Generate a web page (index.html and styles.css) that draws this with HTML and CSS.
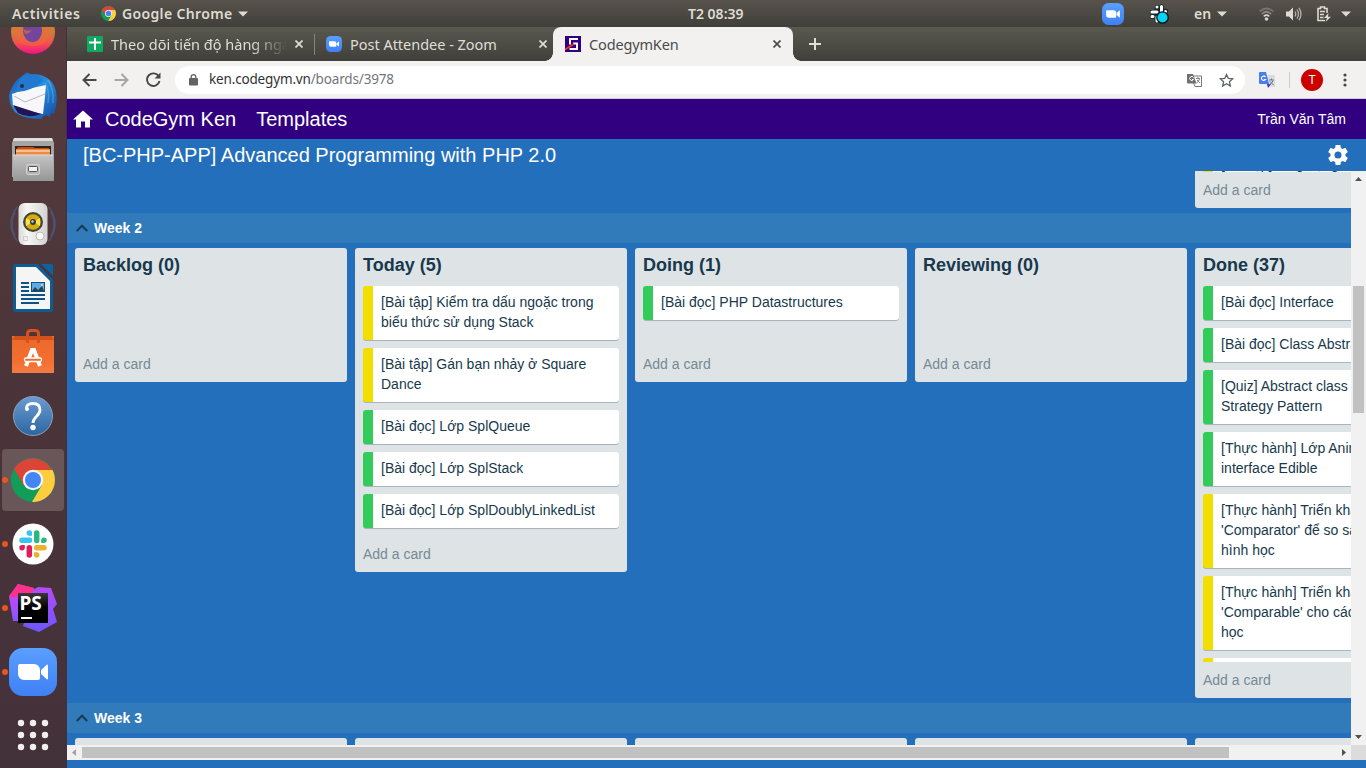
FILE: index.html
```html
<!DOCTYPE html>
<html lang="vi">
<head>
<meta charset="utf-8">
<title>CodegymKen</title>
<link rel="stylesheet" href="styles.css">
</head>
<body>
<svg class="defs" width="0" height="0">
  <defs>
    <linearGradient id="zoomBlue" x1="0" y1="0" x2="0" y2="1"><stop offset="0" stop-color="#5a9fff"/><stop offset="1" stop-color="#3f80f5"/></linearGradient>
    <linearGradient id="fox" x1="0" y1="0" x2="0" y2="1"><stop offset=".5" stop-color="#c9803a"/><stop offset=".75" stop-color="#f4524b"/><stop offset="1" stop-color="#f0108c"/></linearGradient>
    <linearGradient id="bird" x1="0" y1="0" x2="1" y2="1"><stop offset="0" stop-color="#1558b8"/><stop offset=".5" stop-color="#2a8fe0"/><stop offset="1" stop-color="#134a9c"/></linearGradient>
    <linearGradient id="steel" x1="0" y1="0" x2="0" y2="1"><stop offset="0" stop-color="#c4c4c4"/><stop offset="1" stop-color="#969696"/></linearGradient>
    <linearGradient id="bag" x1="0" y1="0" x2="0" y2="1"><stop offset="0" stop-color="#e9682c"/><stop offset=".7" stop-color="#f3702f"/><stop offset="1" stop-color="#f07c48"/></linearGradient>
    <linearGradient id="help" x1="0" y1="0" x2="0" y2="1"><stop offset="0" stop-color="#6a9bd4"/><stop offset="1" stop-color="#2d669f"/></linearGradient>
    <linearGradient id="speaker" x1="0" y1="0" x2="1" y2="0"><stop offset="0" stop-color="#d8d8d6"/><stop offset=".3" stop-color="#f6f6f5"/><stop offset="1" stop-color="#d2d2d0"/></linearGradient>
    <linearGradient id="psA" x1="0" y1="0" x2="0" y2="1"><stop offset="0" stop-color="#ff318c"/><stop offset=".4" stop-color="#b74af7"/><stop offset="1" stop-color="#8a55ff"/></linearGradient>
    <linearGradient id="psB" x1="0" y1="0" x2="0" y2="1"><stop offset="0" stop-color="#b74af7"/><stop offset="1" stop-color="#6b57ff"/></linearGradient>
    <linearGradient id="psC" x1="0" y1="0" x2="0" y2="1"><stop offset="0" stop-color="#3a3a3a"/><stop offset=".5" stop-color="#000"/></linearGradient>
    <symbol id="chrome" viewBox="0 0 44 44">
      <circle cx="22" cy="22" r="22" fill="#109d59"/>
      <path d="M22 12H41.500A22 22 0 0 1 21 44L31 27Z" fill="#ffcd40"/>
      <path d="M3 11 13 28 22 22 22 12H41A22 22 0 0 0 3 11Z" fill="#db4437"/>
      <circle cx="22" cy="22" r="10.200" fill="#f4f4f4"/><circle cx="22" cy="22" r="8" fill="#4285f4"/>
    </symbol>
    <symbol id="zoom" viewBox="0 0 48 48">
      <rect width="48" height="48" rx="14" fill="url(#zoomBlue)"/>
      <path d="M9 18a2 2 0 0 1 2-2h14a6 6 0 0 1 6 6v8a2 2 0 0 1-2 2H15a6 6 0 0 1-6-6ZM32 22l5.500-5Q39 16 39 17.500v13q0 1.500-1.500.5L32 26Z" fill="#fff"/>
    </symbol>
    <symbol id="cross" viewBox="0 0 8 8"><path d="M.5.5l7 7m0-7-7 7" fill="none" stroke="currentColor" stroke-width="1.700"/></symbol>
    <symbol id="caret" viewBox="0 0 10 6"><path d="M0 .5h10L5 5.500Z" fill="currentColor"/></symbol>
    <symbol id="chevron" viewBox="0 0 12 8"><path d="M.7 7l5.300-5.300L11.300 7" fill="none" stroke="#153a52" stroke-width="2"/></symbol>
  </defs>
</svg>

<header class="topbar">
  <span class="activities">Activities</span>
  <svg class="app-icon" width="15" height="15"><use href="#chrome"/></svg>
  <span class="app-name">Google Chrome</span>
  <svg class="app-caret" width="10" height="6"><use href="#caret"/></svg>
  <span class="clock">T2 08:39</span>
  <div class="tray">
    <svg width="22" height="22"><use href="#zoom"/></svg>
    <svg class="tray-slack" width="20" height="20" viewBox="0 0 20 20"><g stroke="#16262c" stroke-width="4.500" stroke-linecap="round"><path d="M8 3v5M12.500 2.500v5M3 8h5M3 12.500h5M8 13v4M13 7h4"/></g><g stroke="#fff" stroke-width="3" stroke-linecap="round"><path d="M8 3v0M12.500 2.500v5M3 8h5M3 12.500h1M8 13v4M16.500 7.500h0"/></g><circle cx="13.500" cy="13.500" r="5.700" fill="#00d4f7" stroke="#111" stroke-width="1.300"/></svg>
    <span class="lang">en</span>
    <svg class="lang-caret" width="10" height="6"><use href="#caret"/></svg>
    <svg class="tray-wifi" width="15" height="14" viewBox="0 0 15 14"><g fill="none" stroke-width="1.700"><path d="M.8 4.500Q7.500-1.500 14.200 4.500" stroke="#77746e"/><path d="M2.800 7Q7.500 2.500 12.200 7" stroke="#8b8882"/><path d="M4.800 9.400Q7.500 7 10.200 9.400" stroke="#d5d3cf"/></g><circle cx="7.500" cy="12" r="1.800" fill="#d5d3cf"/></svg>
    <svg class="tray-volume" width="16" height="14" viewBox="0 0 16 14"><path d="M0 4.500h3L7 .5v13L3 9.500H0Z" fill="#dfdbd2"/><path d="M9 4.500q1.500 2.500 0 5M11 2.500q3 4.500 0 9M13 .8q4 6.200 0 12.400" fill="none" stroke="#b5b1a9" stroke-width="1.300"/></svg>
    <svg class="tray-battery" width="15" height="16" viewBox="0 0 15 16"><path d="M8 14.500H1V2.500h2.500V1h4v1.500H10V7M3 5.500h5M3 8.500h4M3 11.500h3.500" fill="none" stroke="#dfdbd2" stroke-width="1.600"/><path d="M11.500 7 7 12h3l-1.500 4L14 10.800h-3Z" fill="#dfdbd2"/></svg>
    <svg class="tray-caret" width="10" height="6"><use href="#caret"/></svg>
  </div>
</header>

<div class="desktop">
  <nav class="dock">
    <div class="dock-item dock-first">
      <svg width="46" height="46" viewBox="0 0 46 46"><circle cx="23" cy="23" r="22" fill="url(#fox)"/><path d="M3 17Q5 37 23 37T41 16" fill="#ef6a3b" opacity=".5"/><ellipse cx="22.500" cy="22" rx="9.500" ry="11" fill="#74459c"/><path d="M13 20Q18 23 22 21 19 25 15 25" fill="#bd5f58"/></svg>
    </div>
    <div class="dock-item">
      <svg width="50" height="50" viewBox="0 0 50 50"><path d="M14 5Q20-1 22 3 43 2 48 20 50 33 46 43L43 42 42 46 37 44 33 48Q15 48 7 41 1 34 1 24 5 10 14 5Z" fill="url(#bird)"/><path d="M4 23 15 19 38 14Q37 28 35 43L20 40 5 35Z" fill="#f7f7fa"/><path d="m6 25 11 6 20-8" fill="none" stroke="#b6b7c2"/><path d="M9 21Q8 7 19 3 34 5 35 10 22 21 9 21Z" fill="#2378cf"/><path d="M5 34 33 43Q20 48 10 42Z" fill="#251455"/><circle cx="14" cy="15" r="2" fill="#24303b"/><path d="M37 12Q42 20 40 32M40 9Q46 18 45 32" fill="none" stroke="#5ab1ed" opacity=".5" stroke-width="1.500"/></svg>
    </div>
    <div class="dock-item">
      <svg class="raised" width="42" height="44" viewBox="0 0 42 44"><path d="M2 1h38l2 5v34H0V6Z" fill="#a5a5a5"/><path d="M2 1h38l1 3H1Z" fill="#dedede"/><path d="M3 9h36v10H3Z" fill="#2e2420"/><path d="M6 10h15l2 1h14v2H4Z" fill="#c74b19"/><path d="M4 12h34v6H4Z" fill="#ee8b42"/><path d="M4 14h34" stroke="#fff2df"/><path d="M1 18h40l1 26H1Z" fill="url(#steel)"/><path d="M1 18h40" stroke="#e0e0e0"/><rect x="14.500" y="27.500" width="13" height="10" rx="2" fill="#b5b5b5" stroke="#d5d5d5"/><rect x="16.500" y="29.500" width="9" height="5" rx="1" fill="#f2f2f2" stroke="#555"/></svg>
    </div>
    <div class="dock-item">
      <svg width="48" height="44" viewBox="0 0 48 44"><path d="M8 5q-12 17 0 34M6 10q-6 12 0 24M40 5q12 17 0 34M42 10q6 12 0 24" fill="none" stroke="#4c6291" stroke-width="1.500" opacity=".6"/><rect x="9.500" y="1" width="29" height="42" rx="6" fill="url(#speaker)"/><circle cx="24" cy="20" r="10" fill="#454539"/><circle cx="24" cy="20" r="7.800" fill="#d4ad08"/><path d="M24 20 17 16v8ZM24 20l7-4v8Z" fill="#f5e24c"/><circle cx="24" cy="20" r="3" fill="#343a42"/><circle cx="23.500" cy="19.500" r="1.200" fill="#ccc"/><circle cx="31" cy="34" r="4" fill="#f8f8f8" stroke="#bbb"/><rect x="14.500" y="34.500" width="4" height="4" fill="none" stroke="#d0d0d0"/></svg>
    </div>
    <div class="dock-item">
      <svg width="40" height="48" viewBox="0 0 40 48"><path d="M2 0h23l15 15v31a2 2 0 0 1-2 2H2a2 2 0 0 1-2-2V2a2 2 0 0 1 2-2Z" fill="#0e5c92"/><path d="M3 3h20l14 14v28H3Z" fill="#f5f5f5"/><path d="M26.500 0 40 13.500" stroke="#4b3439" stroke-width="2.500"/><path d="M28 0h10a2 2 0 0 1 2 2v10Z" fill="#0b64a0"/><path d="M8 19h8M8 23h8M8 27h8M8 31h24M8 35h24M8 39h18" stroke="#0c5387" stroke-width="2"/><rect x="18.500" y="18.500" width="13" height="9" fill="#5aace6" stroke="#0c5387"/><path d="m19 27 3-4 3 3 4-4 2 5Z" fill="#27414d"/><circle cx="29" cy="21" r="1" fill="#ffdd57"/></svg>
    </div>
    <div class="dock-item">
      <svg class="raised" width="42" height="44" viewBox="0 0 42 44"><path d="M0 7h42v37H0Z" fill="url(#bag)"/><path d="M0 11 3 7H39l3 4Z" fill="#d4501d"/><path d="M15.500 14V5q0-3.500 3.500-3.500h4q3.500 0 3.500 3.500v9" fill="none" stroke="#d6511d" stroke-width="3"/><path d="m14 37 6-16h2l6 16" fill="none" stroke="#fff" stroke-width="4"/><rect x="12.500" y="29" width="17" height="3.500" rx="1.500" fill="#ee6b2c" stroke="#fff" stroke-width="1.300"/></svg>
    </div>
    <div class="dock-item">
      <svg width="42" height="42" viewBox="0 0 42 42"><circle cx="21" cy="21" r="19.500" fill="url(#help)" stroke="#8e9fb4"/><path d="M14.500 14Q14 8.500 21 8.500t7 6.500c0 6-7 6.500-7 13" fill="none" stroke="#fff" stroke-width="2.800"/><circle cx="15" cy="14" r="2" fill="#fff"/><circle cx="21" cy="32.500" r="2.700" fill="#fff"/></svg>
    </div>
    <div class="dock-item running active"><svg width="44" height="44"><use href="#chrome"/></svg></div>
    <div class="dock-item running">
      <svg width="42" height="42" viewBox="0 0 42 42"><circle cx="21" cy="21" r="20.500" fill="#fff"/><g fill="none" stroke-width="5.500" stroke-linecap="round"><path d="M10 17.300h7.500M17.300 10v0" stroke="#36c5f0"/><path d="M24.700 10v7.500M32 17.300h0" stroke="#2eb67d"/><path d="M24.700 24.700H32M24.700 32v0" stroke="#ecb22e"/><path d="M17.300 24.700V32M10 24.700h0" stroke="#e01e5a"/></g><path d="M17.300 10h2.700v2.700h-2.700Z" fill="#36c5f0"/><path d="M29.300 17.300H32v2.700h-2.700Z" fill="#2eb67d"/><path d="M22 29.300h2.700V32H22Z" fill="#ecb22e"/><path d="M10 22h2.700v2.700H10Z" fill="#e01e5a"/></svg>
    </div>
    <div class="dock-item running">
      <svg width="48" height="48" viewBox="0 0 48 48"><path d="M0 12 9 0 25 4V37H4Z" fill="url(#psA)"/><path d="M9 0 25 4 20 12 0 13Z" fill="#ff318c"/><path d="m24 6 5-3 13 1 6 16-4 5 4 13-18 10-16-6Z" fill="url(#psB)"/><rect x="9" y="9" width="30" height="30" fill="url(#psC)"/><path d="M12 34h11" stroke="#fff" stroke-width="2"/><text class="ps-text" x="10.500" y="26">PS</text></svg>
    </div>
    <div class="dock-item running"><svg width="48" height="48"><use href="#zoom"/></svg></div>
    <div class="dock-item">
      <svg class="raised" width="32" height="32" viewBox="0 0 32 32" fill="#f2f0ef"><circle cx="4" cy="4" r="3.200"/><circle cx="16" cy="4" r="3.200"/><circle cx="28" cy="4" r="3.200"/><circle cx="4" cy="16" r="3.200"/><circle cx="16" cy="16" r="3.200"/><circle cx="28" cy="16" r="3.200"/><circle cx="4" cy="28" r="3.200"/><circle cx="16" cy="28" r="3.200"/><circle cx="28" cy="28" r="3.200"/></svg>
    </div>
  </nav>

  <main class="browser">
    <div class="tabs">
      <div class="tab tab-sheet">
        <svg width="16" height="16" viewBox="0 0 16 16"><rect width="16" height="16" rx="1" fill="#0fa960"/><path d="M2 6.500h12M8 2v12" stroke="#fff" stroke-width="2"/></svg>
        <span class="tab-title fade">Theo dõi tiến độ hàng ngày</span>
        <svg class="close" width="8" height="8"><use href="#cross"/></svg>
      </div>
      <div class="tab tab-zoom">
        <svg width="16" height="16"><use href="#zoom"/></svg>
        <span class="tab-title">Post Attendee - Zoom</span>
        <svg class="close" width="8" height="8"><use href="#cross"/></svg>
      </div>
      <div class="tab tab-active">
        <svg width="16" height="16" viewBox="0 0 16 16"><rect width="16" height="16" fill="#310080"/><path d="M13 3H5v5.500M8 7.500h4V13H4.500" fill="none" stroke="#fff" stroke-width="2"/><path d="M0 13.500 9 8" stroke="#f03a17" stroke-width="1.600"/></svg>
        <span class="tab-title">CodegymKen</span>
        <svg class="close" width="8" height="8"><use href="#cross"/></svg>
      </div>
      <svg class="new-tab" width="12" height="12" viewBox="0 0 12 12"><path d="M6 0v12M0 6h12" stroke="#deded9" stroke-width="2"/></svg>
    </div>

    <div class="toolbar">
      <svg class="back" width="15" height="14" viewBox="0 0 15 14"><path d="M14.500 7H1.500M7.500 1l-6 6 6 6" fill="none" stroke="#45484b" stroke-width="1.900"/></svg>
      <svg class="forward" width="15" height="14" viewBox="0 0 15 14"><path d="M.5 7h13M7.500 1l6 6-6 6" fill="none" stroke="#a3a5a6" stroke-width="1.900"/></svg>
      <svg class="reload" width="15" height="15" viewBox="0 0 15 15"><path d="M12.800 4.500A6.300 6.300 0 1 0 13.500 9" fill="none" stroke="#45484b" stroke-width="1.900"/><path d="M14.500.5V6.500H8.500Z" fill="#45484b"/></svg>
      <div class="omnibox">
        <svg class="lock" width="9" height="12" viewBox="0 0 9 12"><path d="M2.200 5V3a2.300 2.300 0 0 1 4.600 0v2" fill="none" stroke="#5f6368" stroke-width="1.300"/><rect y="4" width="9" height="7.500" rx="1" fill="#5f6368"/></svg>
        <span class="url"><span class="host">ken.codegym.vn</span>/boards/3978</span>
        <svg width="15" height="14" viewBox="0 0 15 14"><path d="M6 3h8.500v10.500H8L6.500 10" fill="#fff" stroke="#777"/><path d="M0 1h6l3.500 9.500H1a1 1 0 0 1-1-1Z" fill="#707070"/><path d="M6.500 4.500A2 2 0 1 0 6.500 6.500H5" fill="none" stroke="#fff"/><path d="M9 5.500h4M11 4v1.500M12.500 6q-1 3-3 4M10 7l3 3" fill="none" stroke="#777" stroke-width=".9"/></svg>
        <svg class="star" width="15" height="14" viewBox="0 0 15 14"><path d="m7.500 1.500 1.800 4 4.400.4-3.300 2.900 1 4.300-3.900-2.300-3.900 2.300 1-4.300L1.300 5.900l4.400-.4Z" fill="none" stroke="#5f6368" stroke-width="1.300"/></svg>
      </div>
      <svg class="ext" width="16" height="16" viewBox="0 0 16 16"><path d="M7 3h9v12H9Z" fill="#dcdcdc"/><path d="M0 1q0-1 1-1h6l3 12H1q-1 0-1-1Z" fill="#4a7df0"/><path d="M8 12h4l-3 4Z" fill="#3b31c7"/><path d="M6.500 5A2.200 2.200 0 1 0 6.500 7.500H5" fill="none" stroke="#fff" stroke-width="1.200"/><path d="M10 8h5M12.500 6.500V8M14 8.500q-1 3-3.500 4M11 9.500l3.500 3.500" fill="none" stroke="#5f7f92"/></svg>
      <span class="divider"></span>
      <span class="avatar">T</span>
      <svg class="menu" width="4" height="14" viewBox="0 0 4 14" fill="#45484b"><circle cx="2" cy="2" r="1.600"/><circle cx="2" cy="7" r="1.600"/><circle cx="2" cy="12" r="1.600"/></svg>
    </div>

    <div class="navbar">
      <svg width="20" height="18" viewBox="0 0 20 18"><path d="M10 .5 20 9.500h-3v8h-5v-6H8v6H3v-8H0Z" fill="#fff"/></svg>
      <span class="brand">CodeGym Ken</span>
      <span class="nav-link">Templates</span>
      <span class="user">Trần Văn Tâm</span>
    </div>
    <div class="board-title">
      <h1>[BC-PHP-APP] Advanced Programming with PHP 2.0</h1>
      <svg width="20" height="20" viewBox="2 2 20 20"><path fill="#fff" d="M19.430 12.980c.04-.32.07-.64.07-.98s-.03-.66-.07-.98l2.110-1.650c.19-.15.24-.42.12-.64l-2-3.460c-.12-.22-.39-.3-.61-.22l-2.490 1c-.52-.4-1.080-.73-1.690-.98l-.38-2.650C14.460 2.180 14.250 2 14 2h-4c-.25 0-.46.18-.49.42l-.38 2.650c-.61.25-1.170.59-1.690.98l-2.490-1c-.23-.09-.49 0-.61.22l-2 3.460c-.13.22-.07.49.12.64l2.110 1.650c-.04.32-.07.65-.07.98s.03.66.07.98l-2.110 1.650c-.19.15-.24.42-.12.64l2 3.460c.12.22.39.3.61.22l2.490-1c.52.4 1.080.73 1.690.98l.38 2.650c.03.24.24.42.49.42h4c.25 0 .46-.18.49-.42l.38-2.650c.61-.25 1.170-.59 1.690-.98l2.490 1c.23.09.49 0 .61-.22l2-3.460c.12-.22.07-.49-.12-.64ZM12 15.500A3.500 3.500 0 1 1 12 8.500a3.500 3.500 0 0 1 0 7Z"/></svg>
    </div>

    <div class="scroller">
      <div class="viewport">
        <div class="lane lane-top">
          <section class="column">
            <div class="cards"><article class="card yellow">[Bài tập] Ứng dụng</article></div>
            <div class="add">Add a card</div>
          </section>
        </div>
        <div class="lane-head"><svg width="12" height="8"><use href="#chevron"/></svg>Week 2</div>
        <div class="lane lane-main">
          <section class="column"><h2>Backlog (0)</h2><div class="cards"></div><div class="add">Add a card</div></section>
          <section class="column">
            <h2>Today (5)</h2>
            <div class="cards">
              <article class="card yellow">[Bài tập] Kiểm tra dấu ngoặc trong<br>biểu thức sử dụng Stack</article>
              <article class="card yellow">[Bài tập] Gán bạn nhảy ở Square<br>Dance</article>
              <article class="card green">[Bài đọc] Lớp SplQueue</article>
              <article class="card green">[Bài đọc] Lớp SplStack</article>
              <article class="card green">[Bài đọc] Lớp SplDoublyLinkedList</article>
            </div>
            <div class="add">Add a card</div>
          </section>
          <section class="column"><h2>Doing (1)</h2><div class="cards"><article class="card green">[Bài đọc] PHP Datastructures</article></div><div class="add">Add a card</div></section>
          <section class="column"><h2>Reviewing (0)</h2><div class="cards"></div><div class="add">Add a card</div></section>
          <section class="column">
            <h2>Done (37)</h2>
            <div class="cards">
              <article class="card green">[Bài đọc] Interface</article>
              <article class="card green">[Bài đọc] Class Abstract</article>
              <article class="card green">[Quiz] Abstract class<br>Strategy Pattern</article>
              <article class="card green">[Thực hành] Lớp Animal<br>interface Edible</article>
              <article class="card yellow">[Thực hành] Triển khai<br>'Comparator' để so sánh<br>hình học</article>
              <article class="card yellow">[Thực hành] Triển khai<br>'Comparable' cho các<br>học</article>
              <article class="card yellow"></article>
            </div>
            <div class="add">Add a card</div>
          </section>
        </div>
        <div class="lane-head"><svg width="12" height="8"><use href="#chevron"/></svg>Week 3</div>
        <div class="lane">
          <section class="column"></section><section class="column"></section><section class="column"></section><section class="column"></section><section class="column"></section>
        </div>
      </div>
      <div class="vbar">
        <svg width="7" height="4" viewBox="0 0 7 4"><path d="M0 4 3.500 0 7 4Z" fill="#505050"/></svg>
        <div class="vtrack"><div class="vthumb"></div></div>
        <svg width="7" height="4" viewBox="0 0 7 4"><path d="M0 0h7L3.500 4Z" fill="#505050"/></svg>
      </div>
      <div class="hbar">
        <svg width="4" height="7" viewBox="0 0 4 7"><path d="M4 0v7L0 3.500Z" fill="#a3a3a3"/></svg>
        <div class="htrack"><div class="hthumb"></div></div>
        <svg width="4" height="7" viewBox="0 0 4 7"><path d="M0 0v7l4-3.500Z" fill="#505050"/></svg>
      </div>
      <div class="corner"></div>
    </div>
  </main>
</div>
</body>
</html>
```

FILE: styles.css
```css
* { box-sizing: border-box; }
body { margin: 0; width: 1366px; height: 768px; overflow: hidden; font-family: "Liberation Sans", Arial, sans-serif; }
svg { display: block; flex: none; }
.defs { position: absolute; }

/* system bar */
.topbar { height: 27px; display: flex; align-items: center; background: linear-gradient(#57534c, #403f3a); color: #dfdbd2; font: 600 14px/26px "Noto Sans", "Open Sans", sans-serif; white-space: nowrap; }
.activities { width: 88px; padding-left: 12px; letter-spacing: .6px; }
.app-icon { margin-left: 13px; }
.app-name { width: 116px; margin-left: 6px; letter-spacing: .35px; }
.app-caret { margin-right: 440px; }
.clock { width: 58px; font-size: 14px; letter-spacing: 0; }
.tray { flex: 1; display: flex; align-items: center; padding-left: 356px; }
.tray-slack { margin-left: 25px; }
.lang { margin-left: 25px; width: 22px; }
.lang-caret { margin-left: 1px; }
.tray-wifi { margin-left: 32px; }
.tray-volume { margin-left: 12px; }
.tray-battery { margin-left: 15px; }
.tray-caret { margin-left: 9px; }

/* launcher */
.desktop { display: flex; height: 741px; }
.dock { width: 67px; height: 741px; overflow: hidden; background: linear-gradient(#543b3d, #4b3439 50%, #43313a); border-right: 1px solid #45303a; }
.dock-item { display: flex; align-items: center; justify-content: center; width: 62px; height: 62px; margin: 0 0 2px 2px; border-radius: 4px; position: relative; }
.dock-first { margin-top: -26px; }
.raised { margin-bottom: 2px; }
.active { background: #695659; }
.running::before { content: ""; position: absolute; left: 0; top: 28px; width: 6px; height: 6px; border-radius: 50%; background: #e95420; }
.ps-text { font: bold 19px "Noto Sans", sans-serif; fill: #fff; }

/* browser chrome */
.browser { width: 1299px; height: 741px; display: flex; flex-direction: column; background: #236fbc; }
.tabs { height: 34px; display: flex; background: linear-gradient(#5a594f, #403f3a); color: #deded9; font: 14.500px/34px "Noto Sans", sans-serif; }
.tab { display: flex; align-items: center; padding-left: 20px; white-space: nowrap; }
.tab-sheet { width: 248px; position: relative; }
.tab-sheet::after { content: ""; position: absolute; right: 0; top: 7px; width: 1px; height: 21px; background: #85847c; }
.tab-zoom { width: 238px; padding-left: 11px; }
.tab-title { height: 34px; margin: -1px 0 0 8px; width: 176px; overflow: hidden; }
.tab-zoom .tab-title { width: 181px; letter-spacing: -.02px; }
.tab-active .tab-title { letter-spacing: -.15px; }
.fade { -webkit-mask-image: linear-gradient(90deg, #000 140px, transparent 176px); mask-image: linear-gradient(90deg, #000 140px, transparent 176px); }
.close { margin-left: 8px; }
.tab-active { position: relative; width: 240px; padding-left: 12px; background: #f2f1f0; color: #4b4b4b; border-radius: 8px 8px 0 0; }
.tab-active::before, .tab-active::after { content: ""; position: absolute; bottom: 0; width: 8px; height: 8px; }
.tab-active::before { left: -8px; background: radial-gradient(circle at 0 0, transparent 7.500px, #f2f1f0 8px); }
.tab-active::after { right: -8px; background: radial-gradient(circle at 100% 0, transparent 7.500px, #f2f1f0 8px); }
.new-tab { margin: 11px 0 0 16px; }
.toolbar { height: 38px; display: flex; align-items: center; background: #f2f1f0; border-bottom: 1px solid #cfcecd; padding-left: 15px; }
.forward { margin-left: 17px; }
.reload { margin-left: 17px; }
.omnibox { display: flex; align-items: center; width: 1070px; height: 28px; margin: 0 14px 0 14px; padding: 0 11px 0 14px; border-radius: 14px; background: #fff; color: #72757a; font: 13.500px/28px "Noto Sans", sans-serif; }
.url { flex: 1; margin: -2px 0 0 11px; letter-spacing: -.16px; }
.host { color: #303134; }
.star { margin-left: 17px; }
.divider { width: 1px; height: 16px; margin: 0 11px 0 14px; background: #cfcecd; }
.avatar { width: 22px; height: 22px; border-radius: 50%; background: #c00; color: #fff; font: 12px/22px Roboto, sans-serif; text-align: center; }
.menu { margin-left: 20px; }

/* application header */
.navbar { height: 40px; display: flex; align-items: center; background: #310080; color: #fff; padding: 0 20px 0 6px; font-size: 20px; }
.brand { margin-left: 12px; }
.nav-link { margin-left: 20px; }
.user { margin-left: auto; font-size: 14px; }
.board-title { height: 32px; display: flex; align-items: center; justify-content: space-between; padding: 0 18px 0 16px; color: #fff; }
.board-title h1 { margin: 0; font-size: 20px; font-weight: 400; line-height: 32px; }

/* board */
.scroller { display: grid; grid-template-columns: 1284px 15px; grid-template-rows: 574px 15px; }
.viewport { overflow: hidden; }
.lane { display: flex; align-items: flex-start; gap: 8px; padding: 5px 8px; width: 1408px; }
.lane-top { height: 42px; padding-top: 0; align-items: flex-end; justify-content: flex-end; overflow: hidden; }
.lane-main { height: 460px; }
.lane-head { height: 30px; display: flex; align-items: center; gap: 6px; padding-left: 9px; background: #317bba; color: #fff; font-size: 14px; font-weight: 700; }
.column { flex: none; width: 272px; min-height: 24px; max-height: 450px; display: flex; flex-direction: column; border-radius: 3px; background: #dee3e5; color: #17394d; }
.column h2 { flex: none; height: 38px; margin: 0; padding: 7px 8px; font-size: 18px; line-height: 20px; }
.cards { min-height: 60px; padding: 0 8px; overflow: hidden; }
.lane-top .cards { min-height: 24px; height: 24px; }
.card { min-height: 34px; margin-bottom: 8px; padding: 6px 0 8px 8px; border-left: 10px solid; border-radius: 3px; background: #fff; box-shadow: 0 1px 0 #a7b5bf; color: #17394d; font-size: 14px; line-height: 20px; white-space: nowrap; }
.yellow { border-left-color: #f2df00; }
.green { border-left-color: #33cc5a; }
.add { flex: none; height: 36px; padding: 8px; color: #758a96; font-size: 14px; line-height: 20px; }
.vbar { display: flex; flex-direction: column; align-items: center; padding: 6px 0; background: #f1f1f1; }
.vtrack { flex: 1; width: 11px; padding-top: 105px; }
.vthumb { height: 127px; background: #c1c1c1; }
.hbar { display: flex; align-items: center; padding: 0 5px; background: #f1f1f1; }
.htrack { flex: 1; padding-left: 6px; }
.hthumb { width: 1147px; height: 11px; background: #c1c1c1; }
.corner { background: #dcdcdc; }
```
